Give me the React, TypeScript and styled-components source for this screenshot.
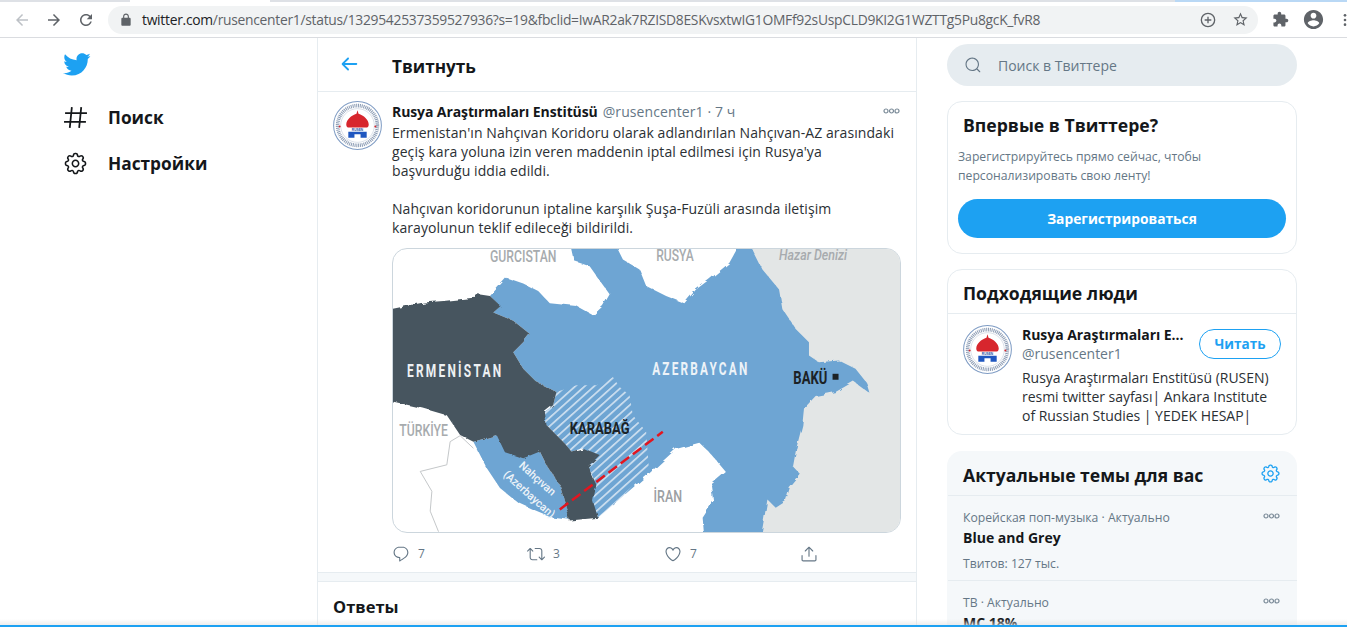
import React from 'react';
import styled, {createGlobalStyle} from 'styled-components';

const GlobalStyle = createGlobalStyle`
  html, body {
    margin: 0;
    height: 627px;
    overflow: hidden;
    background: white;
    font-family: "Open Sans", "Noto Sans", sans-serif;
    color: #14171a;
  }
  * { box-sizing: border-box; }
`;

// браузерная панель
const TabStrip = styled.div`
  height: 2px;
  display: flex;
  background: #dee1e6;
  > i { display: block; }
  > .white { width: 140px; margin-left: 130px; background: white; }
  > .blue { width: 172px; margin-left: auto; background: #b9d8f5; }
`;
const Toolbar = styled.div`
  height: 36px;
  display: flex;
  align-items: center;
  background: white;
  border-bottom: 1px solid #dadce0;
  padding-left: 13px;
`;
const NavIcon = styled.svg<{$w?: number; $gap?: number}>`
  width: ${p => p.$w || 18}px;
  height: ${p => p.$w || 18}px;
  margin-right: ${p => p.$gap || 0}px;
  flex: none;
  fill: #5f6368;
`;
const UrlBar = styled.div`
  width: 1150px;
  height: 28px;
  margin: 0 14px 0 13px;
  padding: 0 9px 0 11px;
  flex: none;
  display: flex;
  align-items: center;
  border-radius: 14px;
  background: #f1f3f4;
`;
const Url = styled.div`
  margin-left: 9px;
  font-size: 13.85px;
  letter-spacing: -.02em;
  white-space: nowrap;
  color: #5f6368;
  flex: 1;
  > b { font-weight: 400; color: #202124; }
`;

// три колонки
const Page = styled.div`
  display: flex;
  align-items: flex-start;
  height: 589px;
  overflow: hidden;
`;
const Sidebar = styled.nav`
  width: 317px;
  flex: none;
  padding: 12px 0 0 63px;
`;
const BirdIcon = styled.svg`
  display: block;
  width: 29px;
  height: 29px;
  fill: #1da1f2;
  margin: 0 0 15px -1px;
`;
const NavItem = styled.div`
  display: flex;
  align-items: center;
  height: 46px;
  font-size: 17.3px;
  font-weight: 700;
  color: #14171a;
  > svg { width: 25px; height: 25px; margin-right: 20px; fill: #14171a; flex: none; }
`;
const Main = styled.main`
  width: 600px;
  flex: none;
  border-left: 1px solid #e6ecf0;
  border-right: 1px solid #e6ecf0;
  height: 589px;
  overflow: hidden;
`;
const MainHeader = styled.div`
  height: 54px;
  display: flex;
  align-items: center;
  padding-left: 20px;
  border-bottom: 1px solid #e6ecf0;
  font-size: 17.2px;
  font-weight: 700;
  > svg { width: 22px; height: 22px; fill: #1da1f2; margin-right: 32px; margin-top: -2px; }
  > span { margin-top: 3px; }
`;
const Tweet = styled.article`
  display: flex;
  padding: 9px 15px 0 15px;
`;
const Avatar = styled.svg<{$size: number}>`
  width: ${p => p.$size}px;
  height: ${p => p.$size}px;
  flex: none;
  display: block;
`;
const TweetBody = styled.div`
  margin-left: 10px;
  width: 509px;
`;
const NameRow = styled.div`
  display: flex;
  align-items: center;
  height: 20px;
  font-size: 14px;
  white-space: nowrap;
  > b { font-weight: 700; letter-spacing: -.1px; }
  > span { margin-left: 5px; color: #657786; letter-spacing: .1px; }
  > svg { margin-left: auto; margin-right: 1px; }
`;
const TweetText = styled.div`
  margin-top: 2px;
  font-size: 14px;
  line-height: 19px;
  letter-spacing: .07px;
  white-space: nowrap;
  color: #2b3034;
`;
const MapFrame = styled.div`
  margin-top: 11px;
  width: 509px;
  height: 285px;
  border: 1px solid #ccd6dd;
  border-radius: 15px;
  overflow: hidden;
  background: white;
  > svg { display: block; width: 100%; height: 100%; }
`;
const Actions = styled.div`
  display: flex;
  height: 39px;
  align-items: center;
  padding-top: 2px;
`;
const Action = styled.div<{$w: number}>`
  width: ${p => p.$w}px;
  display: flex;
  align-items: center;
  font-size: 12px;
  color: #657786;
  > svg { width: 18px; height: 18px; fill: #657786; margin-right: 8px; }
`;
const Band = styled.div`
  height: 10px;
  background: #f5f8fa;
  border-top: 1px solid #e6ecf0;
  border-bottom: 1px solid #e6ecf0;
`;
const RepliesTitle = styled.div`
  padding: 13px 15px;
  font-size: 16.5px;
  font-weight: 700;
  line-height: 24px;
`;

// правая колонка
const Aside = styled.aside`
  width: 350px;
  flex: none;
  margin-left: 30px;
  padding-top: 6px;
`;
const Search = styled.div`
  height: 42px;
  border-radius: 21px;
  background: #e6ecf0;
  display: flex;
  align-items: center;
  padding-left: 17px;
  font-size: 14px;
  color: #657786;
  > svg { width: 18px; height: 18px; fill: #657786; margin-right: 16px; }
`;
const Card = styled.section<{$filled?: boolean}>`
  margin-top: ${p => (p.$filled ? 16 : 15)}px;
  border-radius: 15px;
  border: ${p => (p.$filled ? 'none' : '1px solid #e6ecf0')};
  background: ${p => (p.$filled ? '#f5f8fa' : 'white')};
  overflow: hidden;
  padding-left: ${p => (p.$filled ? 1 : 0)}px;
`;
const CardTitle = styled.h2<{$border?: boolean; $h?: number; $top?: number}>`
  margin: 0;
  height: ${p => p.$h || 44}px;
  padding: ${p => p.$top || 0}px 15px 0;
  display: flex;
  align-items: center;
  justify-content: space-between;
  font-size: 17.6px;
  font-weight: 700;
  border-bottom: ${p => (p.$border ? '1px solid #e6ecf0' : 'none')};
  > svg { width: 21px; height: 21px; fill: #1da1f2; margin-right: 1px; margin-top: -3px; }
`;
const Muted = styled.p`
  margin: 0;
  padding: 0 10px;
  font-size: 12.2px;
  line-height: 19px;
  color: #657786;
`;
const SignUp = styled.div`
  margin: 14px 10px 15px;
  height: 39px;
  border-radius: 20px;
  background: #1da1f2;
  color: white;
  display: flex;
  align-items: center;
  justify-content: center;
  font-size: 13.8px;
  font-weight: 700;
`;
const Person = styled.div`
  display: flex;
  padding: 11px 15px 9px;
`;
const PersonBody = styled.div`
  margin-left: 10px;
  flex: 1;
  min-width: 0;
`;
const PersonTop = styled.div`
  display: flex;
  justify-content: space-between;
  margin-bottom: 5px;
`;
const PersonName = styled.div`
  font-size: 14px;
  line-height: 19px;
  > b { display: block; font-weight: 700; letter-spacing: -.05px; white-space: nowrap; }
  > span { color: #657786; }
`;
const FollowButton = styled.div`
  width: 82px;
  height: 30px;
  margin-top: 4px;
  border: 1px solid #1da1f2;
  border-radius: 15px;
  color: #1da1f2;
  display: flex;
  align-items: center;
  justify-content: center;
  font-size: 13.5px;
  font-weight: 700;
`;
const PersonBio = styled.div`
  font-size: 14px;
  line-height: 19px;
  letter-spacing: -.03px;
  white-space: nowrap;
  color: #2b3034;
`;
const Trend = styled.div`
  position: relative;
  height: 85px;
  padding: 13px 15px 0;
  border-bottom: 1px solid #e6ecf0;
  > svg { position: absolute; right: 17px; top: 17px; }
`;
const TrendMeta = styled.div`
  font-size: 12.2px;
  line-height: 18px;
  color: #657786;
`;
const TrendName = styled.div`
  margin-top: 1px;
  font-size: 14px;
  line-height: 19px;
  font-weight: 700;
`;
const TrendCount = styled(TrendMeta)`
  margin-top: 8px;
`;
const BottomEdge = styled.div`
  position: fixed;
  left: 0;
  right: 0;
  bottom: 0;
  height: 8px;
  background: linear-gradient(rgba(235, 235, 235, 0), rgba(225, 225, 225, .6));
  border-bottom: 2px solid #1da1f2;
`;

const Dots = () => (
  <svg width="17" height="6" viewBox="0 0 17 6" fill="none" stroke="#7b8b98" strokeWidth="1.2">
    <circle cx="3" cy="3" r="2" />
    <circle cx="8.5" cy="3" r="2" />
    <circle cx="14" cy="3" r="2" />
  </svg>
);

const Logo = ({size}: {size: number}) => (
  <Avatar $size={size} viewBox="0 0 48 48">
    <circle cx="24" cy="24" r="23.4" fill="white" stroke="#7f9cc4" strokeWidth="1" />
    <circle cx="24" cy="24" r="19.500" fill="none" stroke="#8d9db5" strokeWidth="3.500" strokeDasharray="1 .8" />
    <circle cx="24" cy="24" r="16.500" fill="white" stroke="#b8c4d6" strokeWidth=".5" />
    <path d="M24 9l1 3.500c5 1.500 10 6 10 10.500 0 1.500-.7 2.500-1.500 3H14.500c-.8-.5-1.500-1.500-1.500-3 0-4.500 5-9 10-10.500z" fill="#d7262d" />
    <text x="24" y="29" fontSize="3.200" fontWeight="700" textAnchor="middle" fill="#1f4fa0" fontFamily='"Liberation Sans", sans-serif'>RUSEN</text>
    <path d="M15 30h18v6h-6v-3.500h-6V36h-6z" fill="#1f57c0" />
    <circle cx="6.500" cy="25" r="1" fill="#d7262d" />
    <circle cx="41.500" cy="25" r="1" fill="#d7262d" />
  </Avatar>
);

const mapBlue = '#6ea5d3';
const mapDark = '#47555f';
const labelFont = 'Roboto, "Liberation Sans", sans-serif';

// карта нарисована вручную, координаты взяты с картинки
const RegionMap = () => (
  <svg viewBox="8 8 1526 855" preserveAspectRatio="none">
    <defs>
      <pattern id="hatch" width="19" height="19" patternUnits="userSpaceOnUse" patternTransform="rotate(-42)">
        <rect width="19" height="19" fill={mapBlue} />
        <rect width="19" height="5" fill="#cfe0f0" />
      </pattern>
      <filter id="rough" x="-5%" y="-5%" width="110%" height="110%">
        <feTurbulence type="fractalNoise" baseFrequency=".035" numOctaves="3" seed="4" />
        <feDisplacementMap in="SourceGraphic" scale="14" />
        <feGaussianBlur stdDeviation="1.200" />
      </filter>
    </defs>
    <path d="M1085 0L1540 0L1540 870L1105 870Z" fill="#e3e6e6" />
    <g filter="url(#rough)">
      <path
        fill={mapBlue}
        d="M545 0L555 45L600 60L635 110L660 145L640 180L610 208L560 180L480 172L445 135L400 112L350 95L300 150L330 180L310 200L370 225L420 265L400 290L370 320L400 370L440 410L500 440L620 700L540 825L620 815L700 755L775 690L860 612L930 593L960 622L1010 682L965 720L972 770L940 820L945 880L1115 880L1135 765L1160 790L1190 770L1202 730L1235 690L1212 665L1222 610L1240 540L1245 490L1280 452L1340 440L1395 408L1445 445L1436 415L1400 370L1350 345L1290 350L1260 330L1260 290L1220 250L1180 190L1170 130L1120 70L1085 0L1048 0L1020 50L960 100L920 130L885 172L830 150L770 120L750 70L700 40L680 0Z"
      />
      <path
        fill={mapBlue}
        d="M250 590L320 570L370 622L450 620L470 660L510 720L540 826L490 820L430 795L385 775L330 730L290 670Z"
      />
    </g>
    <path
      fill="url(#hatch)"
      d="M500 440L560 420L620 420L670 395L690 425L720 450L730 510L770 560L778 670L700 755L625 820L610 770L620 720L595 665L630 630L580 610L545 620L520 590L470 540L425 505L465 500L490 480Z"
    />
    <g filter="url(#rough)">
      <path
        fill={mapDark}
        d="M-10 192L100 170L160 165L250 155L265 145L300 150L332 180L310 200L370 225L420 265L400 290L370 320L400 370L440 410L500 440L490 480L465 500L470 540L520 590L545 620L580 610L630 630L595 665L620 720L610 770L625 820L540 828L510 720L470 660L450 620L400 640L345 622L320 570L250 590L210 570L170 510L100 490L20 472L-10 465Z"
      />
    </g>
    <path d="M250 610L210 572L180 590L170 660L90 680L125 740L120 800L145 862" fill="none" stroke="#c4c7c9" strokeWidth="3" />
    <path d="M510 795L820 560" stroke="#e3151f" strokeWidth="7.500" strokeDasharray="32 14" fill="none" />
    <g fontFamily={labelFont} fontWeight="500">
      <text x="300" y="47" fontSize="52" fill="#a7abae" textLength="200" lengthAdjust="spacingAndGlyphs">GURCİSTAN</text>
      <text x="800" y="43" fontSize="50" fill="#a7abae" textLength="113" lengthAdjust="spacingAndGlyphs">RUSYA</text>
      <text x="1170" y="42" fontSize="44" fontStyle="italic" fill="#a7abae" textLength="205" lengthAdjust="spacingAndGlyphs">Hazar Denizi</text>
      <text x="50" y="395" fontSize="53" letterSpacing="10" fontWeight="700" fill="#edf0f2" textLength="290" lengthAdjust="spacingAndGlyphs">ERMENİSTAN</text>
      <text x="788" y="390" fontSize="53" letterSpacing="10" fontWeight="700" fill="#edf3f8" textLength="293" lengthAdjust="spacingAndGlyphs">AZERBAYCAN</text>
      <text x="1213" y="417" fontSize="53" fontWeight="700" fill="#1c2226" textLength="102" lengthAdjust="spacingAndGlyphs">BAKÜ</text>
      <text x="540" y="568" fontSize="48" fontWeight="700" fill="#1c2226" textLength="180" lengthAdjust="spacingAndGlyphs">KARABAĞ</text>
      <text x="27" y="572" fontSize="50" fill="#a7abae" textLength="146" lengthAdjust="spacingAndGlyphs">TÜRKİYE</text>
      <text x="792" y="772" fontSize="48" fill="#9ca0a3" textLength="86" lengthAdjust="spacingAndGlyphs">İRAN</text>
      <text x="0" y="0" fontSize="34" fill="#eef4f9" transform="translate(385 665) rotate(42)" textLength="135" lengthAdjust="spacingAndGlyphs">Nahçıvan</text>
      <text x="0" y="0" fontSize="34" fill="#eef4f9" transform="translate(338 692) rotate(42)" textLength="195" lengthAdjust="spacingAndGlyphs">(Azerbaycan)</text>
    </g>
    <rect x="1331" y="385" width="18" height="18" fill="#1c2226" />
  </svg>
);

const gearPath = 'M12 8.21c-2.09 0-3.79 1.7-3.79 3.79s1.7 3.79 3.79 3.79 3.79-1.7 3.79-3.79-1.7-3.79-3.79-3.79zm0 6.08c-1.262 0-2.29-1.026-2.29-2.29S10.74 9.71 12 9.71s2.29 1.026 2.29 2.29-1.028 2.29-2.29 2.29z M12.36 22.375h-.722c-1.183 0-2.154-.888-2.262-2.064l-.014-.147c-.025-.287-.207-.533-.472-.644-.27-.11-.57-.065-.793.124l-.114.096c-.904.76-2.222.702-3.058-.134l-.51-.51c-.838-.836-.896-2.154-.136-3.058l.096-.114c.19-.224.235-.53.124-.8-.11-.268-.352-.45-.64-.475l-.148-.014c-1.175-.108-2.064-1.08-2.064-2.262v-.722c0-1.183.89-2.154 2.064-2.262l.148-.014c.287-.025.53-.207.64-.473.11-.27.066-.575-.123-.8l-.096-.113c-.76-.904-.702-2.22.135-3.058l.51-.51c.837-.836 2.155-.894 3.06-.135l.11.096c.225.19.53.235.8.124.268-.11.45-.352.476-.64l.014-.147c.108-1.175 1.08-2.064 2.262-2.064h.722c1.183 0 2.154.89 2.262 2.064l.014.147c.025.287.207.53.472.64.27.11.576.066.8-.123l.113-.096c.904-.76 2.22-.702 3.058.134l.51.51c.837.836.895 2.154.135 3.058l-.096.114c-.19.224-.235.53-.124.8.11.268.353.45.64.475l.148.014c1.175.108 2.064 1.08 2.064 2.262v.722c0 1.183-.89 2.154-2.064 2.262l-.147.014c-.287.025-.53.207-.642.473-.11.27-.065.575.124.8l.096.113c.76.904.702 2.22-.135 3.058l-.51.51c-.837.836-2.155.894-3.06.135l-.11-.096c-.225-.19-.53-.235-.8-.124-.268.11-.45.352-.476.64l-.014.147c-.108 1.175-1.08 2.064-2.262 2.064zm-3.81-4.43c.297 0 .597.058.882.176.785.325 1.322 1.05 1.395 1.892l.014.146c.037.4.367.7.77.7h.722c.4 0 .73-.3.768-.7l.014-.147c.076-.842.613-1.567 1.4-1.892.78-.323 1.667-.187 2.312.355l.113.096c.306.26.756.24 1.04-.046l.51-.51c.286-.285.306-.734.046-1.04l-.096-.113c-.543-.646-.68-1.53-.355-2.313.325-.786 1.05-1.323 1.892-1.4l.146-.013c.4-.037.7-.367.7-.77v-.722c0-.4-.3-.73-.7-.768l-.146-.014c-.842-.076-1.567-.613-1.892-1.4-.324-.78-.188-1.667.355-2.312l.096-.113c.26-.306.24-.755-.046-1.04l-.51-.51c-.285-.285-.734-.306-1.04-.046l-.113.096c-.646.543-1.53.68-2.313.355-.786-.325-1.323-1.05-1.4-1.892l-.013-.145c-.037-.4-.367-.7-.77-.7h-.722c-.4 0-.73.3-.768.7l-.014.146c-.076.842-.613 1.567-1.4 1.892-.78.325-1.667.188-2.312-.355l-.113-.096c-.306-.26-.755-.24-1.04.046l-.51.51c-.286.285-.306.734-.046 1.04l.096.113c.543.646.68 1.53.355 2.313-.325.786-1.05 1.323-1.892 1.4l-.145.013c-.4.037-.7.367-.7.77v.722c0 .4.3.73.7.768l.145.014c.842.076 1.567.613 1.892 1.4.325.78.188 1.667-.355 2.312l-.096.113c-.26.306-.24.755.046 1.04l.51.51c.285.286.734.306 1.04.046l.113-.096c.42-.354.94-.538 1.432-.538z';

function App() {
  return (
    <>
      <GlobalStyle />
      <TabStrip><i className="white" /><i className="blue" /></TabStrip>
      <Toolbar>
        <NavIcon viewBox="0 0 24 24" $gap={14} style={{fill: '#bdc1c6'}}><path d="M20 11H7.830l5.590-5.590L12 4l-8 8 8 8 1.410-1.410L7.830 13H20v-2z" /></NavIcon>
        <NavIcon viewBox="0 0 24 24" $gap={14}><path d="M4 11h12.170l-5.590-5.590L12 4l8 8-8 8-1.410-1.410L16.170 13H4v-2z" /></NavIcon>
        <NavIcon viewBox="0 0 24 24"><path d="M17.650 6.350C16.200 4.900 14.210 4 12 4c-4.420 0-7.990 3.580-7.990 8s3.570 8 7.990 8c3.730 0 6.840-2.550 7.730-6h-2.080c-.82 2.330-3.040 4-5.650 4-3.310 0-6-2.690-6-6s2.690-6 6-6c1.660 0 3.140.69 4.220 1.780L13 11h7V4l-2.350 2.350z" /></NavIcon>
        <UrlBar>
          <NavIcon viewBox="0 0 24 24" $w={14}><path d="M18 8h-1V6c0-2.760-2.240-5-5-5S7 3.240 7 6v2H6c-1.100 0-2 .9-2 2v10c0 1.100.9 2 2 2h12c1.100 0 2-.9 2-2V10c0-1.100-.9-2-2-2zM9 6c0-1.660 1.340-3 3-3s3 1.340 3 3v2H9V6z" /></NavIcon>
          <Url><b>twitter.com</b>/rusencenter1/status/1329542537359527936?s=19&amp;fbclid=IwAR2ak7RZISD8ESKvsxtwIG1OMFf92sUspCLD9KI2G1WZTTg5Pu8gcK_fvR8</Url>
          <NavIcon viewBox="0 0 24 24" $w={16} $gap={16} style={{fill: 'none', stroke: '#5f6368', strokeWidth: 2}}><circle cx="12" cy="12" r="10" /><path d="M12 7v10M7 12h10" /></NavIcon>
          <NavIcon viewBox="0 0 24 24" $w={17}><path d="M22 9.240l-7.190-.62L12 2 9.190 8.630 2 9.240l5.460 4.730L5.820 21 12 17.270 18.180 21l-1.630-7.030L22 9.240zM12 15.400l-3.760 2.270 1-4.280-3.320-2.880 4.380-.38L12 6.100l1.710 4.040 4.380.38-3.320 2.880 1 4.280L12 15.400z" /></NavIcon>
        </UrlBar>
        <NavIcon viewBox="0 0 24 24" $w={17} $gap={13}><path d="M20.500 11H19V7c0-1.100-.9-2-2-2h-4V3.500C13 2.120 11.880 1 10.500 1S8 2.120 8 3.500V5H4c-1.100 0-1.990.9-1.990 2v3.800H3.500c1.490 0 2.700 1.210 2.700 2.700s-1.210 2.700-2.700 2.700H2V20c0 1.100.9 2 2 2h3.800v-1.500c0-1.490 1.210-2.700 2.700-2.700 1.490 0 2.700 1.210 2.700 2.700V22H17c1.100 0 2-.9 2-2v-4h1.500c1.380 0 2.500-1.120 2.500-2.500S21.880 11 20.500 11z" /></NavIcon>
        <NavIcon viewBox="0 0 24 24" $w={23} $gap={13}><path d="M12 2C6.480 2 2 6.480 2 12s4.480 10 10 10 10-4.480 10-10S17.520 2 12 2zm0 3c1.660 0 3 1.340 3 3s-1.340 3-3 3-3-1.340-3-3 1.340-3 3-3zm0 14.200c-2.500 0-4.710-1.280-6-3.220.03-1.990 4-3.080 6-3.080 1.990 0 5.970 1.090 6 3.080-1.290 1.940-3.500 3.220-6 3.220z" /></NavIcon>
        <NavIcon viewBox="0 0 4 18" $w={14}><circle cx="2" cy="3" r="1.700" /><circle cx="2" cy="9" r="1.700" /><circle cx="2" cy="15" r="1.700" /></NavIcon>
      </Toolbar>
      <Page>
        <Sidebar>
          <BirdIcon viewBox="0 0 24 24"><path d="M23.643 4.937c-.835.37-1.732.62-2.675.733.962-.576 1.700-1.490 2.048-2.578-.9.534-1.897.922-2.958 1.130-.85-.904-2.060-1.470-3.400-1.470-2.572 0-4.658 2.086-4.658 4.660 0 .364.042.718.12 1.060-3.873-.195-7.304-2.050-9.602-4.868-.4.69-.63 1.490-.63 2.342 0 1.616.823 3.043 2.072 3.878-.764-.025-1.482-.234-2.110-.583v.06c0 2.257 1.605 4.140 3.737 4.568-.392.106-.803.162-1.227.162-.3 0-.593-.028-.877-.082.593 1.850 2.313 3.198 4.352 3.234-1.595 1.250-3.604 1.995-5.786 1.995-.376 0-.747-.022-1.112-.065 2.062 1.323 4.510 2.093 7.140 2.093 8.570 0 13.255-7.098 13.255-13.254 0-.2-.005-.402-.014-.602.91-.658 1.700-1.477 2.323-2.410z" /></BirdIcon>
          <NavItem>
            <svg viewBox="0 0 24 24" style={{fill: 'none', stroke: '#14171a', strokeWidth: 1.7}}><path d="M8.500 2L6.500 22M17.500 2L15.500 22M2 7.800H23M1 16.200H22" /></svg>
            Поиск
          </NavItem>
          <NavItem>
            <svg viewBox="0 0 24 24"><path d={gearPath} /></svg>
            Настройки
          </NavItem>
        </Sidebar>
        <Main>
          <MainHeader>
            <svg viewBox="0 0 24 24"><path d="M20 11H7.414l4.293-4.293c.39-.39.39-1.023 0-1.414s-1.023-.39-1.414 0l-6 6c-.39.39-.39 1.023 0 1.414l6 6c.195.195.45.293.707.293s.512-.098.707-.293c.39-.39.39-1.023 0-1.414L7.414 13H20c.553 0 1-.447 1-1s-.447-1-1-1z" /></svg>
            <span>Твитнуть</span>
          </MainHeader>
          <Tweet>
            <Logo size={49} />
            <TweetBody>
              <NameRow>
                <b>Rusya Araştırmaları Enstitüsü</b>
                <span>@rusencenter1 · 7 ч</span>
                <Dots />
              </NameRow>
              <TweetText>
                Ermenistan'ın Nahçıvan Koridoru olarak adlandırılan Nahçıvan-AZ arasındaki<br />
                geçiş kara yoluna izin veren maddenin iptal edilmesi için Rusya'ya<br />
                başvurduğu iddia edildi.<br />
                <br />
                Nahçıvan koridorunun iptaline karşılık Şuşa-Fuzüli arasında iletişim<br />
                karayolunun teklif edileceği bildirildi.
              </TweetText>
              <MapFrame><RegionMap /></MapFrame>
              <Actions>
                <Action $w={135}>
                  <svg viewBox="0 0 24 24"><path d="M14.046 2.242l-4.148-.01h-.002c-4.374 0-7.800 3.427-7.800 7.802 0 4.098 3.186 7.206 7.465 7.370v3.828c0 .108.044.286.12.403.142.225.384.347.632.347.138 0 .277-.038.402-.118.264-.168 6.473-4.140 8.088-5.506 1.902-1.610 3.040-3.970 3.043-6.312v-.017c-.006-4.367-3.430-7.787-7.800-7.788zm3.787 12.972c-1.134.96-4.862 3.405-6.772 4.643V16.670c0-.414-.335-.75-.75-.75h-.396c-3.660 0-6.318-2.476-6.318-5.886 0-3.534 2.768-6.302 6.300-6.302l4.147.01h.002c3.532 0 6.300 2.766 6.302 6.296-.003 1.910-.942 3.844-2.514 5.176z" /></svg>
                  7
                </Action>
                <Action $w={137}>
                  <svg viewBox="0 0 24 24"><path d="M23.770 15.670c-.292-.293-.767-.293-1.060 0l-2.220 2.220V7.650c0-2.068-1.683-3.750-3.750-3.750h-5.850c-.414 0-.75.336-.75.75s.336.75.75.75h5.850c1.240 0 2.250 1.010 2.250 2.250v10.240l-2.220-2.220c-.293-.293-.768-.293-1.060 0s-.294.768 0 1.060l3.500 3.500c.145.147.337.22.53.22s.383-.072.53-.22l3.500-3.500c.294-.292.294-.767 0-1.060zm-10.660 3.280H7.260c-1.240 0-2.250-1.010-2.250-2.250V6.460l2.220 2.220c.148.147.34.22.532.22s.384-.073.53-.22c.293-.293.293-.768 0-1.060l-3.500-3.500c-.293-.294-.768-.294-1.060 0l-3.500 3.500c-.294.292-.294.767 0 1.060s.767.293 1.060 0l2.220-2.220V16.700c0 2.068 1.683 3.750 3.750 3.750h5.850c.414 0 .75-.336.75-.75s-.337-.75-.75-.75z" /></svg>
                  3
                </Action>
                <Action $w={136}>
                  <svg viewBox="0 0 24 24"><path d="M12 21.638h-.014C9.403 21.590 1.950 14.856 1.950 8.478c0-3.064 2.525-5.754 5.403-5.754 2.290 0 3.830 1.580 4.646 2.730.814-1.148 2.354-2.730 4.645-2.730 2.880 0 5.404 2.690 5.404 5.755 0 6.376-7.454 13.110-10.037 13.157H12zM7.354 4.225c-2.080 0-3.903 1.988-3.903 4.255 0 5.740 7.034 11.596 8.550 11.658 1.518-.062 8.550-5.917 8.550-11.658 0-2.267-1.823-4.255-3.903-4.255-2.528 0-3.940 2.936-3.952 2.965-.23.562-1.156.562-1.387 0-.014-.03-1.425-2.965-3.954-2.965z" /></svg>
                  7
                </Action>
                <Action $w={40}>
                  <svg viewBox="0 0 24 24"><path d="M17.530 7.470l-5-5c-.293-.293-.768-.293-1.060 0l-5 5c-.294.293-.294.768 0 1.060s.767.294 1.060 0l3.720-3.720V15c0 .414.336.75.75.75s.75-.336.75-.75V4.810l3.720 3.720c.146.147.338.22.53.22s.384-.072.53-.22c.293-.293.293-.767 0-1.060z" /><path d="M19.708 21.944H4.292C3.028 21.944 2 20.916 2 19.652V14c0-.414.336-.75.75-.75s.75.336.75.75v5.652c0 .437.355.792.792.792h15.416c.437 0 .792-.355.792-.792V14c0-.414.336-.75.75-.75s.75.336.75.75v5.652c0 1.264-1.028 2.292-2.292 2.292z" /></svg>
                </Action>
              </Actions>
            </TweetBody>
          </Tweet>
          <Band />
          <RepliesTitle>Ответы</RepliesTitle>
        </Main>
        <Aside>
          <Search>
            <svg viewBox="0 0 24 24"><path d="M21.530 20.470l-3.660-3.660C19.195 15.240 20 13.214 20 11c0-4.970-4.030-9-9-9s-9 4.030-9 9 4.030 9 9 9c2.215 0 4.240-.804 5.808-2.130l3.660 3.660c.147.146.34.22.53.22s.385-.073.53-.22c.295-.293.295-.767.002-1.060zM3.500 11c0-4.135 3.365-7.500 7.500-7.500s7.500 3.365 7.500 7.500-3.365 7.500-7.500 7.500-7.500-3.365-7.500-7.500z" /></svg>
            Поиск в Твиттере
          </Search>
          <Card>
            <CardTitle $h={45}>Впервые в Твиттере?</CardTitle>
            <Muted>Зарегистрируйтесь прямо сейчас, чтобы<br />персонализировать свою ленту!</Muted>
            <SignUp>Зарегистрироваться</SignUp>
          </Card>
          <Card>
            <CardTitle $border $top={3}>Подходящие люди</CardTitle>
            <Person>
              <Logo size={49} />
              <PersonBody>
                <PersonTop>
                  <PersonName>
                    <b>Rusya Araştırmaları E...</b>
                    <span>@rusencenter1</span>
                  </PersonName>
                  <FollowButton>Читать</FollowButton>
                </PersonTop>
                <PersonBio>
                  Rusya Araştırmaları Enstitüsü (RUSEN)<br />
                  resmi twitter sayfası| Ankara Institute<br />
                  of Russian Studies | YEDEK HESAP|
                </PersonBio>
              </PersonBody>
            </Person>
          </Card>
          <Card $filled>
            <CardTitle $border $h={45} $top={4}>
              Актуальные темы для вас
              <svg viewBox="0 0 24 24"><path d={gearPath} /></svg>
            </CardTitle>
            <Trend>
              <Dots />
              <TrendMeta>Корейская поп-музыка · Актуально</TrendMeta>
              <TrendName>Blue and Grey</TrendName>
              <TrendCount>Твитов: 127 тыс.</TrendCount>
            </Trend>
            <Trend>
              <Dots />
              <TrendMeta>ТВ · Актуально</TrendMeta>
              <TrendName>МС 18%</TrendName>
            </Trend>
          </Card>
        </Aside>
      </Page>
      <BottomEdge />
    </>
  );
}

export default App;
